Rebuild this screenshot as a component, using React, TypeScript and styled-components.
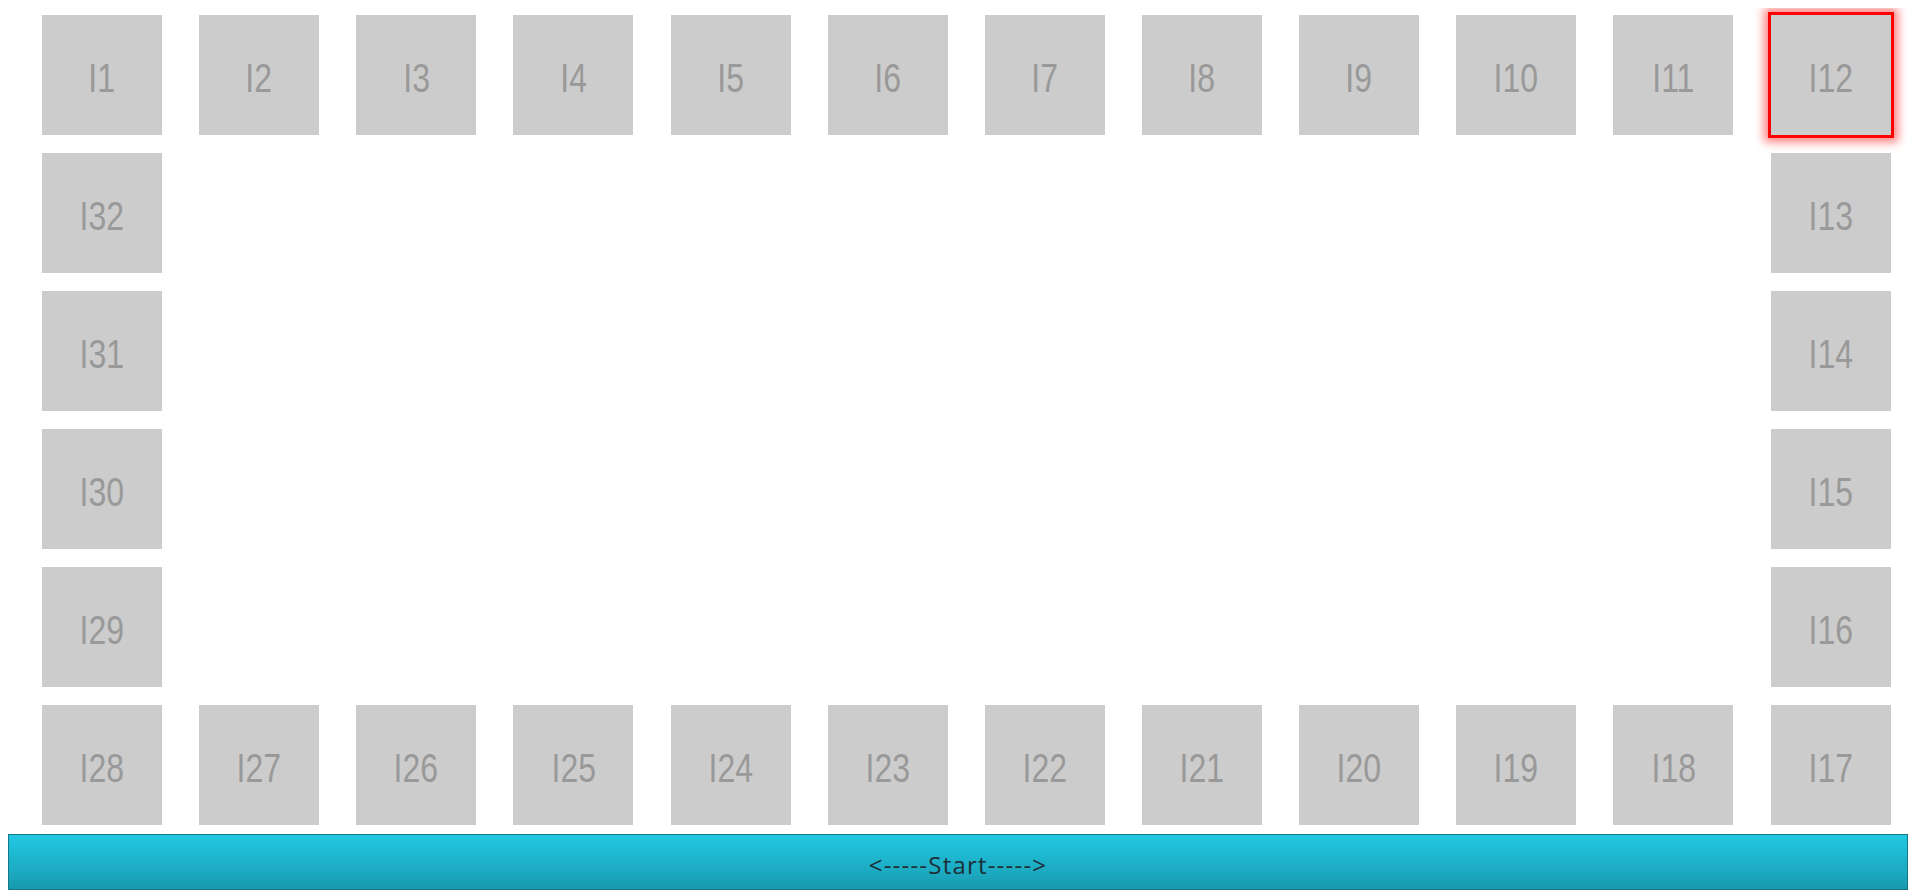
import React from "react";
import styled, { createGlobalStyle } from "styled-components";

const GlobalStyle = createGlobalStyle`
  html, body { background: #fff; }
  body { margin: 8px; }
`;

const Board = styled.div`
  display: grid;
  grid-template-columns: repeat(12, 120px);
  grid-auto-rows: 120px;
  column-gap: 37.15px;
  row-gap: 18px;
  padding: 7px 0 0 34px;
`;

const Tile = styled.div<{ $row: number; $col: number; $active?: boolean }>`
  grid-row: ${(p) => p.$row};
  grid-column: ${(p) => p.$col};
  background: #cccccc;
  display: flex;
  align-items: center;
  justify-content: center;
  padding-top: 6px;
  box-sizing: border-box;
  ${(p) =>
    p.$active
      ? `outline: 3px solid #ff0000; box-shadow: 0 0 9px 7px rgba(255, 0, 0, 0.5);`
      : ""}
`;

const Label = styled.span`
  display: inline-block;
  font-family: "Liberation Sans", Arial, sans-serif;
  font-size: 40px;
  line-height: 1;
  color: #999999;
  transform: scaleX(0.8);
`;

const StartBar = styled.button`
  display: flex;
  align-items: center;
  justify-content: center;
  width: 1900px;
  height: 56px;
  margin-top: 9px;
  box-sizing: border-box;
  border: 1px solid #167886;
  background: linear-gradient(to bottom, #21c8e2 0%, #1ca9c0 70%, #1898ad 100%);
  font-family: "Open Sans", "Noto Sans", sans-serif;
  font-size: 24px;
  letter-spacing: 1.2px;
  color: #1e2f38;
  padding: 5px 0 0;
  cursor: pointer;
`;

type Cell = { id: number; row: number; col: number };

function buildCells(): Cell[] {
  const cells: Cell[] = [];
  for (let c = 1; c <= 12; c++) cells.push({ id: c, row: 1, col: c });
  for (let r = 2; r <= 5; r++) cells.push({ id: 11 + r, row: r, col: 12 });
  for (let c = 12; c >= 1; c--) cells.push({ id: 17 + (12 - c), row: 6, col: c });
  for (let r = 5; r >= 2; r--) cells.push({ id: 29 + (5 - r), row: r, col: 1 });
  return cells;
}

const cells = buildCells();

export default function App() {
  return (
    <>
      <GlobalStyle />
      <Board>
        {cells.map((c) => (
          <Tile key={c.id} $row={c.row} $col={c.col} $active={c.id === 12}>
            <Label>{`I${c.id}`}</Label>
          </Tile>
        ))}
      </Board>
      <StartBar>{"<-----Start----->"}</StartBar>
    </>
  );
}
